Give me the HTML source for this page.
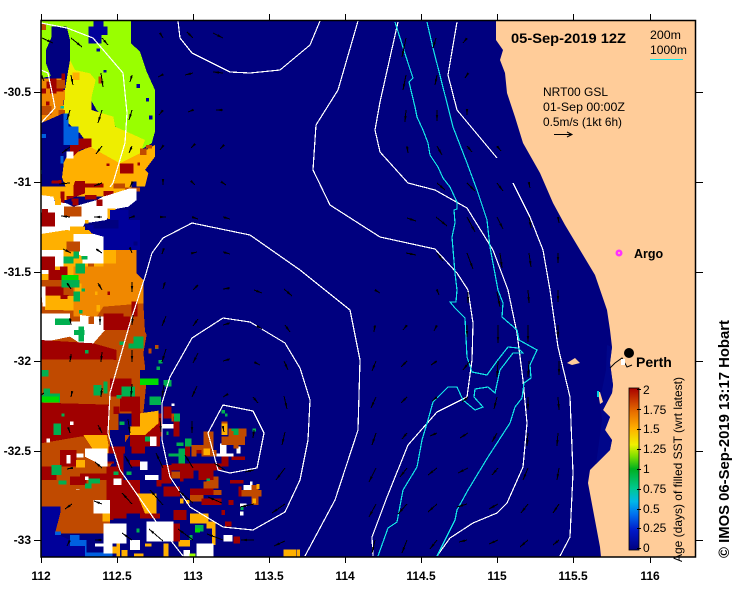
<!DOCTYPE html>
<html><head><meta charset="utf-8"><title>IMOS SST Age Map</title>
<style>
html,body{margin:0;padding:0;background:#fff}
svg{display:block}
text{font-family:"Liberation Sans",Arial,sans-serif;fill:#000}
.c{shape-rendering:crispEdges}
</style></head>
<body>
<svg xmlns="http://www.w3.org/2000/svg" width="739" height="592" viewBox="0 0 739 592">
<defs>
<linearGradient id="cb" x1="0" y1="1" x2="0" y2="0">
<stop offset="0" stop-color="#00007f"/><stop offset=".12" stop-color="#0018c8"/><stop offset=".22" stop-color="#0070f0"/><stop offset=".3" stop-color="#00b8e8"/><stop offset=".38" stop-color="#00c890"/><stop offset=".5" stop-color="#00b020"/><stop offset=".58" stop-color="#80e000"/><stop offset=".65" stop-color="#f0f000"/><stop offset=".75" stop-color="#ffb000"/><stop offset=".85" stop-color="#e87000"/><stop offset="1" stop-color="#a80000"/>
</linearGradient>
<clipPath id="pl"><rect x="41" y="21" width="654" height="536"/></clipPath>
<marker id="ah" markerUnits="userSpaceOnUse" markerWidth="7" markerHeight="4" refX="6" refY="2" orient="auto"><path d="M0 .8L6 2 0 3.2Z" fill="#000"/></marker>
</defs>
<rect x="41" y="20" width="655" height="537" fill="#00007f"/>
<g clip-path="url(#pl)">
<!-- land -->
<path fill="#ffcc99" d="M496 21L496 40 503 50 500 60 505 73 507 93 515 117 523 143 540 173 553 203 565 225 580 250 595 275 607 310 610 330 612 347 610 363 613 385 612 393 603 410 610 417 605 430 612 440 610 450 590 470 588 483 600 547 601 557 697 557 697 21Z"/>
<path fill="#00068a" d="M607 345L612 347 610 363 613 385 612 393 603 410 610 417 605 430 612 440 610 450 596 464 598 450 602 420 600 400 606 370Z"/>
<path fill="#ffcc99" d="M567 363L575 358 580 363 572 365ZM598 392L600 392 603 402 600 404Z"/>
<path fill="none" stroke="#000" d="M610 368L615 363 622 358 627 367 632 365"/>
<path fill="#fff" d="M621 359h4v6h-4z"/>
<path fill="#00d0e0" d="M597 391h2v6h-2z"/>
<!-- top section -->
<g transform="translate(30,10) scale(.33333)" shape-rendering="crispEdges">
<path fill="#99ff00" d="M32 32H110V120L120 150 100 190 32 205ZM110 32H303V100L330 125 350 185 375 240V365L365 400 330 420 290 380 200 300 120 160 110 120Z"/>
<path fill="#00007f" d="M65 50H110L120 90V165L100 190 65 205 48 160V120L65 80Z"/>
<path fill="#00009a" d="M175 50H190V32H220V50H232V75H215V100H175ZM200 115h10v10h-10zM220 180h10v8h-10zM320 222h10v12h-10zM348 264h9v11h-9zM357 317h10v12h-10z"/>
<path fill="#f08800" d="M32 205H100V340H32Z"/>
<path fill="#ffb000" d="M32 530H320V560H32ZM32 660H220V810H32Z"/>
<path fill="#eeee00" d="M120 150L135 180 180 190 197 210 185 260 185 300 250 320 255 350 290 365 345 390 330 430 270 460 180 410 150 370 115 340 100 310 103 250Z"/>
<path fill="#ffb000" d="M128 188h20v22h-20zM110 440L180 410 270 460 330 430 375 405V440L345 480 355 490 345 530H290L250 520V535L110 540 95 500 95 470ZM32 670H110V720H32ZM70 530H110V570H60ZM32 545H48V555H32ZM120 650H165V670H120ZM218 720H265V800H190V762H218Z"/>
<path fill="#f08800" d="M32 250H60V290H32ZM75 240H105V270H75ZM258 720H320V790L340 810H170V770H220V760H258ZM130 770H170V810H130Z"/>
<path fill="#c04a00" d="M32 40H48V60H32ZM32 288H65V315H32ZM80 210H105V235H80ZM205 200h10v20h-10zM102 590H155V620H102ZM110 695H150V725H110ZM330 415H350V435H330ZM348 405h18v10h-18zM250 520H285V535H250ZM276 480H295V490H276ZM285 532H330V545H285ZM174 760h18v10h-18zM210 685h10v20h-10zM85 300h20v30H85Z"/>
<path fill="#a00000" d="M95 190h10v20H95ZM60 205H80V250H60ZM32 235H48V250H32ZM50 215H65V235H50ZM80 235H100V245H80ZM120 385H185V410L150 420 130 440 120 430ZM65 500H95V520H65ZM135 513H165V550L110 570V558H130V530ZM165 520H220V533H165ZM270 460H310V490H270ZM32 608H75V650H32ZM32 740H75V780H32ZM55 780H110V810H55ZM220 543H250V558H220ZM165 555H200V568H165ZM200 568H218V588H200ZM295 545H320V570H295ZM92 545H103V580H92ZM125 565H145V575H125ZM230 460h9v8h-9zM322 458h8v8h-8zM48 275h10v12H48ZM90 770h22v25H90Z"/>
<path fill="#fff" d="M32 555L70 560 75 575 110 580 130 590 200 570 220 560 300 535H320V570L295 590 240 600 230 630 165 640 150 665 110 660 32 672ZM130 672H220V760H158V740L130 725ZM110 425H130V445H110ZM35 780h20v12H35ZM32 720H100V740H32ZM75 740H100V770H75Z"/>
<path fill="#a00000" d="M32 608H75V650H32ZM102 590H155V620H102ZM200 568h18v20h-18zM128 575h18v12h-18zM36 597h18v10H36ZM32 740H75V780H32ZM55 780H110V810H55Z"/>
<path fill="#c04a00" d="M102 590H155V620H102ZM110 695H150V725H110Z"/>
<path fill="#ffb000" d="M75 565h18v20H75ZM165 630h10v10h-10zM232 595h25v32h-25zM120 650h45v20h-45z"/>
<path fill="#00009a" d="M165 645H190V655H265V630H330V720H220V680L185 670ZM240 600H295V630H240Z"/>
<path fill="#00007f" d="M32 340L100 310V470L95 510 32 515ZM310 695h12v12h-12z"/>
<path fill="#0060e0" d="M100 310H115V350H145V405H100ZM92 438h9v22h-9zM32 372h16v12H32zM32 480h4v12h-4z"/>
<path fill="#00b050" d="M100 740H130V760H100ZM137 760H165V790H137ZM130 725H147V745H130ZM155 738h18v10h-18z"/>
<path fill="#00dc00" d="M95 795H145V810H95Z"/>
<path fill="#00c0a0" d="M92 288h10v8H92Z"/>
<path fill="#00007f" d="M320 720H375V810H345L340 790 320 790ZM305 515h15v18h-15z"/>
</g>
<!-- lower section -->
<g transform="translate(30,280) scale(.33333)" shape-rendering="crispEdges">
<path fill="#c04a00" d="M32 0H340V70L345 155 350 165 340 220 350 300 340 400 240 560 240 760H75L90 690H32Z"/>
<path fill="#f08800" d="M130 0H340V70L220 80 200 110H130Z"/>
<path fill="#a00000" d="M32 20H100V45H32ZM95 45h20v12H95ZM232 35h8v10h-8z"/>
<path fill="#ffb000" d="M45 48H130V92H45ZM135 10H155V35H135ZM195 35h8v10h-8zM60 92h20v12H60ZM57 140h18v24H57ZM200 75h10v20h-10z"/>
<path fill="#c04a00" d="M45 90H100V100H45Z"/>
<path fill="#fff" d="M32 100H120V125H150V105L190 110H225V150L190 190 150 190 120 170 32 188ZM32 20h15v60H38Z"/>
<path fill="#c04a00" d="M175 110h17v22h-17z"/>
<path fill="#00b050" d="M75 115H120V135H75ZM145 140h17v45h-17zM132 150h32v15h-32zM95 0H148V22H95ZM130 35H150V65H130ZM147 90h10v10h-10zM155 25h10v10h-10z"/>
<path fill="#a00000" d="M220 100H280V150H220ZM305 65H322V110H305ZM32 180L190 190 260 210V240H32ZM275 110h25v40h-25zM92 45h20v12H92Z"/>
<path fill="#c04a00" d="M32 238H250L245 300 240 372 150 390 32 372Z"/>
<path fill="#a00000" d="M240 295H305V350H240ZM270 350H330V395H270ZM32 368L240 374 235 465 150 470 32 490ZM305 395H332V440H305Z"/>
<path fill="#ffb000" d="M160 465H230L240 520 190 510Z"/>
<path fill="#c04a00" d="M32 490L160 472 180 505 235 530 232 640 130 632 32 622Z"/>
<path fill="#a00000" d="M90 510H140V560H90ZM32 560H80V600H32ZM150 580H230V600H150ZM120 590H170V615H120ZM62 630H120V650H62ZM232 530h20v20h-20z"/>
<path fill="#ffb000" d="M138 540H165V562H138ZM130 690h16v20h-16z"/>
<path fill="#fff" d="M165 505H232V560H215L195 545 165 530ZM110 525h12v25h-12zM140 520h20v12h-20zM50 475h10v12H50ZM120 425h10v10h-10zM138 628h10v8h-10zM165 590h10v10h-10z"/>
<path fill="#c04a00" d="M32 630H180L230 690 220 760H75L90 690H32Z"/>
<path fill="#00009a" d="M32 680H92V695L75 760 120 780H165V830H32Z"/>
<path fill="#0060e0" d="M120 765H148V780H170V818H248V830H165V798H120ZM75 755h18v10H75Z"/>
<path fill="#a00000" d="M250 380h18v22h-18zM250 680h20v30h-20zM230 560H300V640H230ZM230 640H290V720H230ZM335 400H395V470H335ZM300 450H390V500H300Z"/>
<path fill="#00007f" d="M345 225H390V300L345 310H330V270H345ZM265 400H305V440H330V465H240V450H265ZM240 465H285V500H240ZM232 520H255V545H232ZM280 500H320V530H280ZM345 500H395V560H330V540H345ZM280 560H345V600H280ZM305 600H330V650H305ZM360 600H400V720H385L360 680ZM250 715H300V720H250ZM335 420h15v20h-15z"/>
<path fill="#a00000" d="M305 500H345V520H305ZM235 500H285V520H235ZM330 465H385V500H330ZM250 600H330V650H250ZM290 650H345V700H290ZM260 520H280V570H260ZM300 540H330V560H300Z"/>
<path fill="#ffb000" d="M330 400L385 392V430L345 465H300V440H330ZM320 640H380V700H345ZM400 790h16v40h-16zM480 700H535V730H480ZM530 725h20v20h-20zM760 808h38v22h-38zM800 808h10v22h-10zM260 755h10v75h-10zM275 810h18v20h-18zM312 820h28v10h-28zM345 790h20v10h-20zM220 800h40v20h-40zM218 700h22v25h-22zM445 780h35v20h-35zM546 725h10v70h-10z"/>
<path fill="#fff" d="M350 725H430V785H350ZM220 730H290V790H248V820H220ZM190 660H240V700H190ZM195 790h30v10h-30zM300 780h30v30h-30zM395 432H432V445H395ZM330 545h22v25h-22zM360 470h20v28h-20zM345 585h40v15h-40zM250 595h25v20h-25zM640 615h28v20h-28zM570 490h20v40h-20zM560 520h50v10h-50zM500 790h50v40h-50zM580 765h28v20h-28zM630 670h20v10h-20zM425 370h8v8h-8zM630 695h10v12h-10zM620 500h12v20h-12zM460 810h20v20h-20zM660 605h8v10h-8z"/>
<path fill="#c04a00" d="M520 455H550V510H520ZM575 470H645V495H575ZM595 445H650V470H595ZM575 425h18v40h-18zM540 510h20v20h-20zM485 495h55v35h-55zM610 495h15v10h-15zM625 630H695V650H625ZM665 615h20v60h-20zM480 640H520V665H480ZM520 605H565V625H520ZM545 630h30v15h-30zM425 400h20v25h-20zM425 575h25v20h-25zM530 590h35v15h-35z"/>
<path fill="#ffb000" d="M575 430h18v35h-18zM520 505h20v20h-20zM680 612h8v15h-8zM668 655h10v15h-10zM450 655h10v15h-10zM468 660h10v10h-10z"/>
<path fill="#a00000" d="M430 410H448V470H430ZM400 380h25v35h-25zM425 550H560V572H425ZM450 570H490V605H450ZM505 560H550V600H505ZM395 555h30v55h-30zM400 620h50v30h-50zM480 625h70v20h-70zM515 655H575V675H515ZM430 690h40v30h-40zM500 510h15v30h-15zM550 550h25v20h-25zM605 530h40v10h-40zM575 530h20v30h-20zM600 600h40v10h-40zM595 660h15v15h-15zM575 690h10v15h-10zM625 620h10v30h-10zM465 500h15v30h-15zM430 730h20v55h-20zM585 725h20v15h-20zM610 770h20v20h-20zM330 700h60v15h-60zM380 600h15v20h-15z"/>
<path fill="#00b050" d="M40 325H60V365H35V345H40ZM60 340H90V368H60ZM70 430H93V465H70ZM35 270h20v20H35ZM65 555h30v30H65ZM175 595h35v15h-35zM165 610h20v15h-20zM85 602h25v12H85zM190 315h25v32h-25zM275 320h40v30h-40zM220 305h12v35h-12zM260 345h15v10h-15zM310 170h30v35h-30zM295 190h25v15h-25zM268 185h15v10h-15zM165 210h10v10h-10zM358 350h35v25h-35zM400 300h25v20h-25zM432 400h18v25h-18zM385 240h12v10h-12zM375 195h10v12h-10zM380 260h10v10h-10zM400 455h15v10h-15zM268 425h15v10h-15zM345 470h15v15h-15zM445 505h20v45h-20zM415 520h30v10h-30zM440 488h20v10h-20zM465 475h20v25h-20zM290 575h15v10h-15zM250 575h15v10h-15zM610 445h15v20h-15zM605 445h20v8h-20zM575 390h10v10h-10zM585 400h8v10h-8zM668 445h10v10h-10zM632 680h8v10h-8zM530 595h10v8h-10zM95 400h8v10H95zM495 735h25v20h-25zM478 765h10v15h-10zM320 745h8v12h-8z"/>
<path fill="#00dc00" d="M330 295H385V315H330ZM32 350h55v18H32ZM495 745h15v12h-15z"/>
<path fill="#99ff00" d="M478 820h18v10h-18z"/>
<path fill="#00007f" d="M395 450h15v20h-15zM420 480h20v20h-20zM500 520h15v30h-15zM460 595h40v25h-40zM370 500h20v10h-20z"/>
<path fill="#c04a00" d="M375 195h10v10h-10zM355 205h10v15h-10z"/>
</g>
<!-- contours -->
<g fill="none" stroke="#fff" stroke-width="1.2" class="c">
<path d="M41 23L67 28 93 38 123 73 127 113 125 143 113 183 110 187"/>
<path d="M41 70L48 73 53 97 55 108 41 123"/>
<path d="M178 21L180 38 192 53 230 72 250 73 280 70 310 45 320 21"/>
<path d="M305 556L335 500 358 430 360 360 350 310 300 270 250 235 192 223 163 238 152 253 145 277 130 323 110 393 108 433 120 470 157 523 183 556"/>
<path d="M223 318L250 322 285 343 300 368 310 400 308 440 300 480 285 512 253 530 223 527 190 507 170 477 162 440 162 403 170 377 192 338Z"/>
<path d="M223 405L253 411 264 433 257 468 230 473 218 470 208 433Z"/>
<path d="M398 22L380 102 375 130 380 152 408 183 435 190 467 208 493 250 508 290 517 333 523 380 527 423 523 467 507 503 497 513 473 523 450 538 437 556"/>
<path d="M358 21L338 90 316 125 313 170 330 205 380 237 435 249 457 273 468 290 473 323 472 360 467 397 437 412 408 445 387 497 372 537 373 556"/>
<path d="M457 22L450 63 448 75 457 110 497 158"/>
<path d="M513 183L530 217 543 250 550 290 558 347 570 397 573 473 570 537 560 556"/>
</g>
<g fill="none" stroke="#14e6e6" stroke-width="1.2" class="c">
<path d="M395 22L408 63 413 78 409 82 415 107 417 117 423 130 428 143 430 155 438 167 443 178 450 187 457 202 457 209 454 210 455 223 452 237 455 273 457 290 456 302 450 302 455 308 465 318 467 357 472 372 487 375 497 361 508 347 518 348 523 353 513 353 500 370 495 393 488 387 475 389 474 397 483 407 475 410 463 400 457 387 448 387 433 402 428 420 422 440 417 467 403 490 397 522 388 528 378 556"/>
<path d="M427 22L433 48 448 107 453 127 467 163 477 190 487 220 490 247 498 290 503 303 502 317 517 330 519 340 537 350 530 365 531 378 524 383 522 398 515 407 510 423 488 457 468 490 457 510 455 520 446 538 437 556"/>
</g>
<!-- current vectors -->
<g fill="none" stroke="#000" stroke-width="1" marker-end="url(#ah)" class="c">
<path d="M42 38l11 5"/><path d="M71 38l11 9"/><path d="M102 38l6 7"/><path d="M160 33l3 5"/><path d="M187 32l6 6"/><path d="M213 33l10 5"/><path d="M406 38l-4 19"/><path d="M436 38l-3 10"/><path d="M467 38l-4 5"/>
<path d="M42 77l2 4"/><path d="M71 75l2 10"/><path d="M101 73l2 14"/><path d="M132 75l-2 7"/><path d="M162 75l-4 2"/><path d="M193 73l-8 2"/><path d="M223 73l-10-1"/><path d="M406 75l-3 15"/><path d="M437 75l-2 10"/><path d="M467 75l-2 3"/>
<path d="M70 110l-3 10"/><path d="M102 110l-4 13"/><path d="M132 110l-3 10"/><path d="M163 110l-4 5"/><path d="M193 110l-5 2"/><path d="M223 110l-7 0"/><path d="M406 110l-1 12"/><path d="M437 110l0 11"/><path d="M467 110l0 5"/>
<path d="M70 147l-8 6"/><path d="M102 146l-6 8"/><path d="M132 146l-3 7"/><path d="M163 146l-3 4"/><path d="M193 146l-2 2"/><path d="M223 146l-3 3"/><path d="M407 146l1 7"/><path d="M437 146l5 9"/><path d="M467 146l5 6"/><path d="M497 146l4 5"/>
<path d="M70 183l-11 1"/><path d="M102 183l-8 3"/><path d="M132 183l-2 4"/><path d="M163 183l0 2"/><path d="M193 183l2 2"/><path d="M223 183l3 2"/><path d="M437 183l8 7"/><path d="M467 183l8 8"/><path d="M497 183l6 8"/><path d="M529 183l1 5"/>
<path d="M70 217l-9-1"/><path d="M102 217l-8 0"/><path d="M132 217l-3 1"/><path d="M162 217l4 0"/><path d="M192 217l6 2"/><path d="M223 217l7 2"/><path d="M407 218l9 3"/><path d="M436 217l11 9"/><path d="M467 217l8 15"/><path d="M497 217l6 12"/><path d="M529 217l2 11"/><path d="M558 217l1 6"/>
<path d="M63 249l8 4"/><path d="M96 249l6 4"/><path d="M130 248l2 5"/><path d="M163 251l-1 3"/><path d="M193 253l4-1"/><path d="M223 252l7 2"/><path d="M406 253l10 2"/><path d="M437 253l6 8"/><path d="M467 253l6 16"/><path d="M500 253l2 15"/><path d="M529 253l2 14"/><path d="M558 253l0 10"/>
<path d="M67 283l4 6"/><path d="M98 283l4 7"/><path d="M132 282l0 10"/><path d="M165 282l-2 7"/><path d="M198 285l-5 5"/><path d="M230 288l-7 1"/><path d="M254 290l8 3"/><path d="M284 289l8 7"/><path d="M375 290l5 3"/><path d="M437 290l2 5"/><path d="M468 292l0 11"/><path d="M497 292l3 15"/><path d="M528 290l1 13"/><path d="M558 290l0 12"/>
<path d="M70 318l1 7"/><path d="M100 316l0 9"/><path d="M133 315l-1 10"/><path d="M166 316l-4 10"/><path d="M198 319l-5 7"/><path d="M230 323l-7 2"/><path d="M257 326l5 3"/><path d="M285 325l5 7"/><path d="M375 325l-1 7"/><path d="M407 325l-4 5"/><path d="M437 325l-3 6"/><path d="M467 325l0 12"/><path d="M498 325l0 18"/><path d="M528 325l0 17"/><path d="M558 325l0 13"/>
<path d="M71 354l-1 8"/><path d="M102 352l-1 10"/><path d="M132 350l0 12"/><path d="M166 349l-4 13"/><path d="M198 353l-5 10"/><path d="M230 359l-7 2"/><path d="M254 362l6 3"/><path d="M284 361l4 9"/><path d="M376 361l-4 10"/><path d="M407 361l-6 6"/><path d="M437 361l-6 4"/><path d="M470 361l-7 9"/><path d="M498 361l-1 16"/><path d="M529 361l-1 16"/><path d="M559 361l0 14"/>
<path d="M41 395l3-2"/><path d="M72 392l-1 5"/><path d="M102 388l-1 9"/><path d="M132 384l-1 13"/><path d="M164 385l-2 12"/><path d="M197 386l-5 11"/><path d="M228 394l-5 3"/><path d="M253 397l5 6"/><path d="M284 396l3 13"/><path d="M376 397l-5 11"/><path d="M407 397l-6 6"/><path d="M437 397l-5 4"/><path d="M468 397l-6 5"/><path d="M497 397l-3 12"/><path d="M528 397l0 13"/><path d="M558 397l1 13"/>
<path d="M69 430l1 3"/><path d="M98 425l4 8"/><path d="M128 419l2 14"/><path d="M160 418l1 14"/><path d="M192 421l0 12"/><path d="M223 427l1 5"/><path d="M254 430l-1 8"/><path d="M285 432l-3 13"/><path d="M376 433l-4 12"/><path d="M407 433l-5 6"/><path d="M437 433l-7 3"/><path d="M468 433l-8 5"/><path d="M497 433l-5 9"/><path d="M528 433l-1 13"/><path d="M558 433l-1 13"/>
<path d="M72 468l-5 1"/><path d="M102 468l-7-6"/><path d="M132 468l-7-12"/><path d="M163 468l-7-15"/><path d="M193 468l-8-13"/><path d="M225 470l-11-7"/><path d="M254 470l-9 2"/><path d="M285 468l-9 12"/><path d="M376 468l-7 14"/><path d="M407 468l-7 9"/><path d="M437 468l-9 7"/><path d="M468 468l-10 5"/><path d="M498 468l-6 7"/><path d="M528 468l-5 12"/><path d="M559 468l-2 12"/>
<path d="M72 504l-7 5"/><path d="M102 504l-8-3"/><path d="M132 504l-10-11"/><path d="M163 505l-13-15"/><path d="M193 503l-14-12"/><path d="M222 503l-14-6"/><path d="M254 504l-14 3"/><path d="M285 504l-13 9"/><path d="M376 504l-7 13"/><path d="M407 504l-9 10"/><path d="M437 504l-9 8"/><path d="M467 504l-10 3"/><path d="M498 504l-9 5"/><path d="M528 504l-7 9"/><path d="M559 504l-6 9"/>
<path d="M70 540l-3 6"/><path d="M102 540l-7 0"/><path d="M132 540l-10-7"/><path d="M163 541l-14-12"/><path d="M193 540l-15-11"/><path d="M223 540l-16-6"/><path d="M254 540l-13 0"/><path d="M285 541l-11 5"/><path d="M375 540l-3 13"/><path d="M407 540l-5 13"/><path d="M437 540l-7 9"/><path d="M467 540l-8 2"/><path d="M498 540l-9 4"/><path d="M528 540l-8 7"/><path d="M559 540l-6 5"/>
</g>
</g>
<!-- frame & ticks -->
<rect x="41" y="20.5" width="654.5" height="536.5" fill="none" stroke="#000" stroke-width="1.5"/>
<path stroke="#000" stroke-width="1" fill="none" d="M41.5 14V21M117.5 14V21M193.5 14V21M269.5 14V21M345.5 14V21M421.5 14V21M497.5 14V21M573.5 14V21M650.5 14V21M41.5 557V563M117.5 557V563M193.5 557V563M269.5 557V563M345.5 557V563M421.5 557V563M497.5 557V563M573.5 557V563M650.5 557V563M34 92.5H41M34 182.5H41M34 272.5H41M34 361.5H41M34 451.5H41M34 540.5H41M696 92.5H703M696 182.5H703M696 272.5H703M696 361.5H703M696 451.5H703M696 540.5H703"/>
<!-- axis labels -->
<g font-size="12" font-weight="bold" text-anchor="middle">
<text x="41" y="580">112</text><text x="117" y="580">112.5</text><text x="193" y="580">113</text><text x="269" y="580">113.5</text><text x="345" y="580">114</text><text x="421" y="580">114.5</text><text x="497" y="580">115</text><text x="573" y="580">115.5</text><text x="650" y="580">116</text>
</g>
<g font-size="12" font-weight="bold" text-anchor="end">
<text x="31" y="96">-30.5</text><text x="31" y="186">-31</text><text x="31" y="276">-31.5</text><text x="31" y="365">-32</text><text x="31" y="455">-32.5</text><text x="31" y="544">-33</text>
</g>
<!-- annotations -->
<text x="511" y="43" font-size="14" font-weight="bold" textLength="115" lengthAdjust="spacingAndGlyphs">05-Sep-2019 12Z</text>
<text x="650" y="39" font-size="12" textLength="31" lengthAdjust="spacingAndGlyphs">200m</text>
<text x="650" y="54" font-size="12" textLength="37" lengthAdjust="spacingAndGlyphs">1000m</text>
<path d="M650 59.5H683" stroke="#14e6e6" fill="none"/>
<text x="543" y="96" font-size="12" textLength="65" lengthAdjust="spacingAndGlyphs">NRT00 GSL</text>
<text x="543" y="111" font-size="12" textLength="82" lengthAdjust="spacingAndGlyphs">01-Sep 00:00Z</text>
<text x="543" y="126" font-size="12" textLength="79" lengthAdjust="spacingAndGlyphs">0.5m/s (1kt 6h)</text>
<path d="M554 134.5H571M567 132L572 134.5 567 137" stroke="#000" fill="none"/>
<circle cx="619" cy="253" r="3" fill="#ff33ff" stroke="#ff33ff"/>
<circle cx="619" cy="253" r="1" fill="#ffcc99"/>
<text x="634" y="258" font-size="12.5" font-weight="bold">Argo</text>
<circle cx="629" cy="353" r="5" fill="#000"/>
<text x="636" y="367" font-size="14" font-weight="bold">Perth</text>
<!-- colour bar -->
<rect x="629" y="388" width="10" height="162" fill="url(#cb)" stroke="#000" stroke-width=".8"/>
<path stroke="#000" fill="none" d="M637 389.5H641M637 409.5H641M637 429.5H641M637 449.5H641M637 469.5H641M637 489.5H641M637 509.5H641M637 528.5H641M637 548.5H641"/>
<g font-size="12">
<text x="643" y="394">2</text><text x="643" y="414">1.75</text><text x="643" y="433">1.5</text><text x="643" y="453">1.25</text><text x="643" y="473">1</text><text x="643" y="493">0.75</text><text x="643" y="513">0.5</text><text x="643" y="532">0.25</text><text x="643" y="552">0</text>
</g>
<text transform="translate(682,562) rotate(-90)" font-size="12" textLength="185" lengthAdjust="spacingAndGlyphs">Age (days) of filled SST (wrt latest)</text>
<text transform="translate(729,558) rotate(-90)" font-size="14.5" font-weight="bold" textLength="238" lengthAdjust="spacingAndGlyphs">© IMOS 06-Sep-2019 13:17 Hobart</text>
</svg>
</body></html>
